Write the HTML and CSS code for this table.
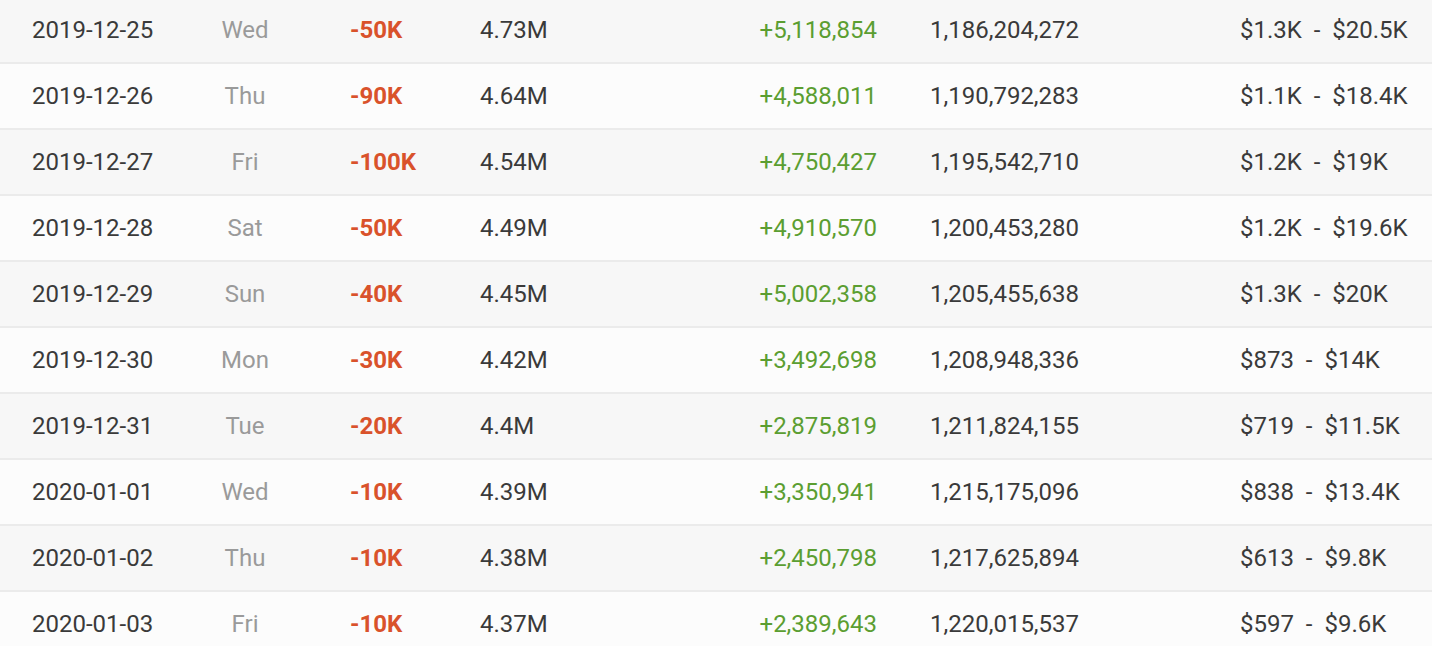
FILE: index.html
```html
<!DOCTYPE html>
<html>
<head>
<meta charset="utf-8">
<link rel="stylesheet" href="styles.css">
</head>
<body>
<div class="table">
  <div class="row"><span class="date">2019-12-25</span><span class="day">Wed</span><span class="delta">-50K</span><span class="total">4.73M</span><span class="gain">+5,118,854</span><span class="views">1,186,204,272</span><span class="earn">$1.3K &nbsp;-&nbsp; $20.5K</span></div>
  <div class="row"><span class="date">2019-12-26</span><span class="day">Thu</span><span class="delta">-90K</span><span class="total">4.64M</span><span class="gain">+4,588,011</span><span class="views">1,190,792,283</span><span class="earn">$1.1K &nbsp;-&nbsp; $18.4K</span></div>
  <div class="row"><span class="date">2019-12-27</span><span class="day">Fri</span><span class="delta">-100K</span><span class="total">4.54M</span><span class="gain">+4,750,427</span><span class="views">1,195,542,710</span><span class="earn">$1.2K &nbsp;-&nbsp; $19K</span></div>
  <div class="row"><span class="date">2019-12-28</span><span class="day">Sat</span><span class="delta">-50K</span><span class="total">4.49M</span><span class="gain">+4,910,570</span><span class="views">1,200,453,280</span><span class="earn">$1.2K &nbsp;-&nbsp; $19.6K</span></div>
  <div class="row"><span class="date">2019-12-29</span><span class="day">Sun</span><span class="delta">-40K</span><span class="total">4.45M</span><span class="gain">+5,002,358</span><span class="views">1,205,455,638</span><span class="earn">$1.3K &nbsp;-&nbsp; $20K</span></div>
  <div class="row"><span class="date">2019-12-30</span><span class="day">Mon</span><span class="delta">-30K</span><span class="total">4.42M</span><span class="gain">+3,492,698</span><span class="views">1,208,948,336</span><span class="earn">$873 &nbsp;-&nbsp; $14K</span></div>
  <div class="row"><span class="date">2019-12-31</span><span class="day">Tue</span><span class="delta">-20K</span><span class="total">4.4M</span><span class="gain">+2,875,819</span><span class="views">1,211,824,155</span><span class="earn">$719 &nbsp;-&nbsp; $11.5K</span></div>
  <div class="row"><span class="date">2020-01-01</span><span class="day">Wed</span><span class="delta">-10K</span><span class="total">4.39M</span><span class="gain">+3,350,941</span><span class="views">1,215,175,096</span><span class="earn">$838 &nbsp;-&nbsp; $13.4K</span></div>
  <div class="row"><span class="date">2020-01-02</span><span class="day">Thu</span><span class="delta">-10K</span><span class="total">4.38M</span><span class="gain">+2,450,798</span><span class="views">1,217,625,894</span><span class="earn">$613 &nbsp;-&nbsp; $9.8K</span></div>
  <div class="row"><span class="date">2020-01-03</span><span class="day">Fri</span><span class="delta">-10K</span><span class="total">4.37M</span><span class="gain">+2,389,643</span><span class="views">1,220,015,537</span><span class="earn">$597 &nbsp;-&nbsp; $9.6K</span></div>
</div>
</body>
</html>
```

FILE: styles.css
```css
html, body {
  margin: 0;
  padding: 0;
  background: #fcfcfc;
  overflow: hidden;
}
.table {
  margin-top: -2px;
  font-family: Roboto, "Liberation Sans", sans-serif;
  font-size: 24px;
  color: #3a3a3a;
}
.row {
  display: grid;
  grid-template-columns: 158px 110px 180px 200px 197px 363px 1fr;
  align-items: center;
  height: 64px;
  padding-left: 32px;
  border-bottom: 2px solid #ebebeb;
  background: #fcfcfc;
}
.row:nth-child(odd) {
  background: #f7f7f7;
}
.day {
  text-align: center;
  color: #9a9a9a;
}
.delta {
  padding-left: 50px;
  color: #d9522b;
  font-weight: 700;
}
.gain {
  text-align: right;
  color: #5b9e31;
}
.views {
  padding-left: 53px;
}
.earn {
  white-space: pre;
}
```
